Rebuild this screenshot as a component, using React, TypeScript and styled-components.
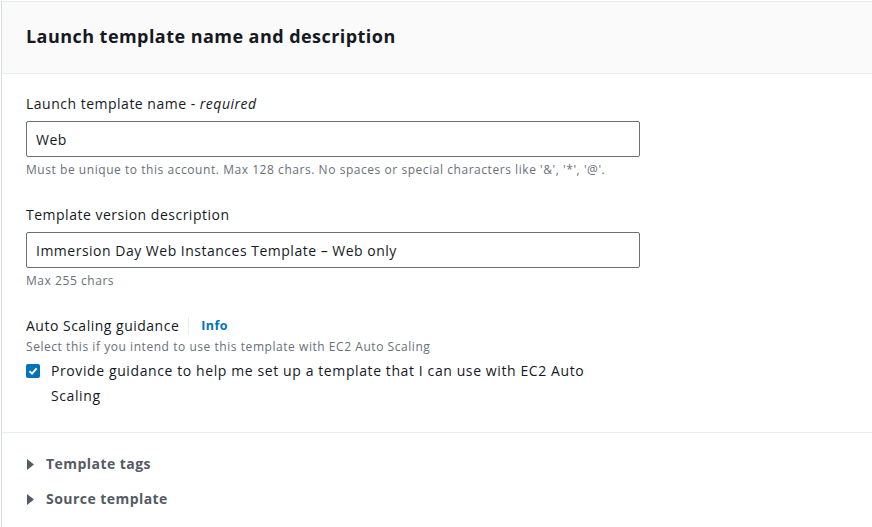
import React from "react";
import styled, { createGlobalStyle } from "styled-components";

const Global = createGlobalStyle`
  html, body { margin: 0; padding: 0; background: #ffffff; }
  body { font-family: "Open Sans", Roboto, Arial, sans-serif; color: #16191f; }
  * { box-sizing: border-box; }
`;

const Page = styled.div`
  width: 872px;
  height: 527px;
  overflow: hidden;
  padding: 1px 0 0 1px;
  display: flex;
`;

const Container = styled.section`
  border-top: 1px solid #eaeded;
  border-left: 1px solid #d5dbdb;
  width: 900px;
  flex: none;
  background: #ffffff;
`;

const Header = styled.header`
  background: #fafafa;
  border-bottom: 1px solid #eaeded;
  height: 72px;
  padding: 0 24px 3px;
  display: flex;
  align-items: center;
`;

const Title = styled.h2`
  margin: 0;
  font-size: 18px;
  font-weight: 700;
  letter-spacing: 0.45px;
  color: #16191f;
`;

const Body = styled.div`
  padding: 18px 24px 24px 24px;
  display: flex;
  flex-direction: column;
  gap: 25px;
`;

const Field = styled.div`
  display: flex;
  flex-direction: column;
  width: 614px;
`;

const LabelRow = styled.div<{ $flush?: boolean }>`
  display: flex;
  align-items: center;
  font-size: 14px;
  line-height: 22px;
  letter-spacing: 0.5px;
  padding-top: 1px;
  margin-bottom: ${(p) => (p.$flush ? "0" : "6px")};
`;

const LabelText = styled.label`
  color: #16191f;
`;

const Em = styled.i`
  font-style: italic;
`;

const Input = styled.input`
  width: 614px;
  height: 36px;
  border: 1px solid #687078;
  border-radius: 2px;
  padding: 0 9px;
  font-family: inherit;
  font-size: 14px;
  letter-spacing: 0.5px;
  color: #16191f;
  outline: none;
  background: #fff;
`;

const Hint = styled.div<{ $tight?: boolean }>`
  font-size: 12px;
  line-height: 16px;
  letter-spacing: 0.55px;
  color: #687078;
  margin-top: ${(p) => (p.$tight ? "2px" : "5px")};
`;

const Divider = styled.span`
  width: 1px;
  height: 18px;
  background: #eaeded;
  margin: 0 12px 0 9px;
`;

const InfoLink = styled.a`
  color: #0073bb;
  font-weight: 700;
  font-size: 12.5px;
  letter-spacing: 0.4px;
  text-decoration: none;
`;

const CheckRow = styled.label`
  display: flex;
  align-items: flex-start;
  gap: 11px;
  margin-top: 3px;
`;

const Box = styled.span`
  flex: none;
  width: 14px;
  height: 14px;
  margin-top: 6px;
  border-radius: 2px;
  background: #0073bb;
  display: flex;
  align-items: center;
  justify-content: center;
`;

const CheckText = styled.span`
  font-size: 14px;
  line-height: 25px;
  letter-spacing: 0.6px;
  color: #16191f;
  max-width: 575px;
`;

const Separator = styled.hr`
  margin: 0;
  border: none;
  border-top: 1px solid #eaeded;
`;

const Expanders = styled.div`
  padding: 20px 24px;
  display: flex;
  flex-direction: column;
  gap: 13px;
`;

const Expander = styled.div`
  display: flex;
  align-items: center;
  gap: 12px;
  font-size: 14px;
  font-weight: 700;
  line-height: 22px;
  letter-spacing: 0.45px;
  color: #545b64;
  padding-left: 1px;
`;

const Caret = () => (
  <svg width="7" height="11" viewBox="0 0 7 11">
    <path d="M0 0 L7 5.5 L0 11 Z" fill="#545b64" />
  </svg>
);

export default function App() {
  return (
    <>
      <Global />
      <Page>
        <Container>
          <Header>
            <Title>Launch template name and description</Title>
          </Header>
          <Body>
            <Field>
              <LabelRow>
                <LabelText>
                  Launch template name - <Em>required</Em>
                </LabelText>
              </LabelRow>
              <Input defaultValue="Web" />
              <Hint>
                Must be unique to this account. Max 128 chars. No spaces or special characters like '&amp;', '*', '@'.
              </Hint>
            </Field>
            <Field>
              <LabelRow>
                <LabelText>Template version description</LabelText>
              </LabelRow>
              <Input defaultValue="Immersion Day Web Instances Template – Web only" />
              <Hint>Max 255 chars</Hint>
            </Field>
            <Field>
              <LabelRow $flush>
                <LabelText>Auto Scaling guidance</LabelText>
                <Divider />
                <InfoLink href="#">Info</InfoLink>
              </LabelRow>
              <Hint $tight>Select this if you intend to use this template with EC2 Auto Scaling</Hint>
              <CheckRow>
                <Box>
                  <svg width="10" height="10" viewBox="0 0 10 10">
                    <path d="M1.5 5.2 L4 7.6 L8.6 2.4" fill="none" stroke="#fff" strokeWidth="2" />
                  </svg>
                </Box>
                <CheckText>
                  Provide guidance to help me set up a template that I can use with EC2 Auto Scaling
                </CheckText>
              </CheckRow>
            </Field>
          </Body>
          <Separator />
          <Expanders>
            <Expander>
              <Caret />
              Template tags
            </Expander>
            <Expander>
              <Caret />
              Source template
            </Expander>
          </Expanders>
        </Container>
      </Page>
    </>
  );
}
